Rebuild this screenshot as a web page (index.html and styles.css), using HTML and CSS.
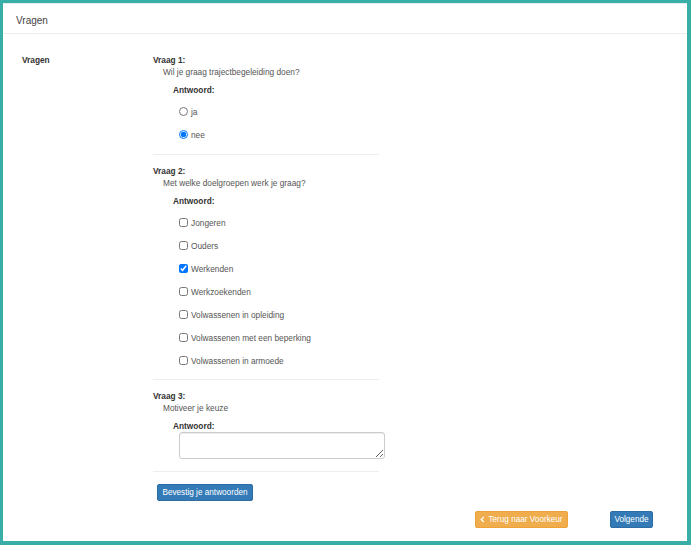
FILE: index.html
```html
<!DOCTYPE html>
<html lang="nl">
<head>
<meta charset="utf-8">
<title>Vragen</title>
<link rel="stylesheet" href="styles.css">
</head>
<body>
<div class="frame">
  <div class="panel-heading">Vragen</div>
  <div class="panel-body">
    <div class="form-row">
      <div class="side-label">Vragen</div>
      <div class="questions">
        <div class="question">
          <div class="q-title">Vraag 1:</div>
          <div class="q-text">Wil je graag trajectbegeleiding doen?</div>
          <div class="answer-label">Antwoord:</div>
          <div class="options">
            <label class="option"><input type="radio" name="q1"><span>ja</span></label>
            <label class="option"><input type="radio" name="q1" checked><span>nee</span></label>
          </div>
        </div>
        <hr class="sep sep-1">
        <div class="question">
          <div class="q-title">Vraag 2:</div>
          <div class="q-text">Met welke doelgroepen werk je graag?</div>
          <div class="answer-label">Antwoord:</div>
          <div class="options">
            <label class="option"><input type="checkbox"><span>Jongeren</span></label>
            <label class="option"><input type="checkbox"><span>Ouders</span></label>
            <label class="option"><input type="checkbox" checked><span>Werkenden</span></label>
            <label class="option"><input type="checkbox"><span>Werkzoekenden</span></label>
            <label class="option"><input type="checkbox"><span>Volwassenen in opleiding</span></label>
            <label class="option"><input type="checkbox"><span>Volwassenen met een beperking</span></label>
            <label class="option"><input type="checkbox"><span>Volwassenen in armoede</span></label>
          </div>
        </div>
        <hr class="sep sep-2">
        <div class="question">
          <div class="q-title">Vraag 3:</div>
          <div class="q-text">Motiveer je keuze</div>
          <div class="answer-label">Antwoord:</div>
          <textarea class="answer-text"></textarea>
        </div>
        <hr class="sep sep-3">
        <button class="btn btn-primary btn-confirm">Bevestig je antwoorden</button>
      </div>
    </div>
    <div class="nav-row">
      <button class="btn btn-warning btn-back"><svg class="chev" viewBox="0 0 8 10" width="5" height="7"><path d="M6 1 L2 5 L6 9" fill="none" stroke="#fff" stroke-width="2"/></svg>Terug naar Voorkeur</button>
      <button class="btn btn-primary btn-next">Volgende</button>
    </div>
  </div>
</div>
</body>
</html>
```

FILE: styles.css
```css
html, body {
  margin: 0;
  padding: 0;
  background: #ffffff;
}
body {
  font-family: "Liberation Sans", Arial, sans-serif;
  font-size: 8.3px;
  color: #333333;
}
.frame {
  box-sizing: border-box;
  width: 691px;
  height: 545px;
  border: 3px solid #38aea6;
  border-bottom-width: 4px;
  border-right-width: 4px;
  background: #ffffff;
}
.panel-heading {
  box-sizing: border-box;
  height: 31px;
  padding: 11px 0 0 13px;
  font-size: 10px;
  line-height: 12px;
  color: #444;
  border-top: 1px solid #e3eef3;
  border-bottom: 1px solid #ececec;
}
.panel-body {
  padding-top: 20px;
}
.form-row {
  display: flex;
}
.side-label {
  width: 131px;
  padding-left: 19px;
  font-weight: bold;
  line-height: 12px;
}
.questions {
  width: 226px;
}
.q-title {
  font-weight: bold;
  line-height: 12px;
}
.q-text {
  padding-left: 10px;
  line-height: 12px;
  color: #555;
}
.answer-label {
  padding-left: 20px;
  margin-top: 6px;
  font-weight: bold;
  line-height: 12px;
}
.options {
  margin-top: 4px;
  padding-left: 26px;
}
.option {
  display: flex;
  align-items: center;
  height: 23px;
  color: #555;
}
.option input {
  width: 9px;
  height: 9px;
  margin: 0 3px 0 0;
}
.sep {
  border: 0;
  border-top: 1px solid #eeeeee;
  margin: 0;
  height: 0;
}
.sep-1 { margin-top: 8px; margin-bottom: 10px; }
.sep-2 { margin-top: 7px; margin-bottom: 10px; }
.sep-3 { margin-top: 12px; margin-bottom: 12px; }
.answer-text {
  display: block;
  box-sizing: border-box;
  margin: 0 0 0 26px;
  width: 206px;
  height: 27px;
  border: 1px solid #cccccc;
  border-radius: 3px;
  box-shadow: inset 0 1px 1px rgba(0,0,0,0.075);
  font-family: inherit;
  font-size: 9px;
}
.btn {
  display: inline-flex;
  align-items: center;
  justify-content: center;
  box-sizing: border-box;
  height: 17px;
  padding: 0;
  border-radius: 2px;
  font-family: "Liberation Sans", Arial, sans-serif;
  font-size: 8.2px;
  white-space: nowrap;
  color: #ffffff;
  border: 1px solid transparent;
  cursor: pointer;
}
.btn-primary {
  background: #337ab7;
  border-color: #2e6da4;
}
.btn-warning {
  background: #f0ad4e;
  border-color: #eea236;
}
.btn-confirm {
  margin-left: 4px;
  width: 96px;
}
.nav-row {
  display: flex;
  justify-content: flex-end;
  gap: 42px;
  margin-top: 10px;
  padding-right: 34px;
}
.btn-back {
  width: 93px;
}
.btn-next {
  width: 43px;
}
.chev {
  margin-right: 3px;
}
```
